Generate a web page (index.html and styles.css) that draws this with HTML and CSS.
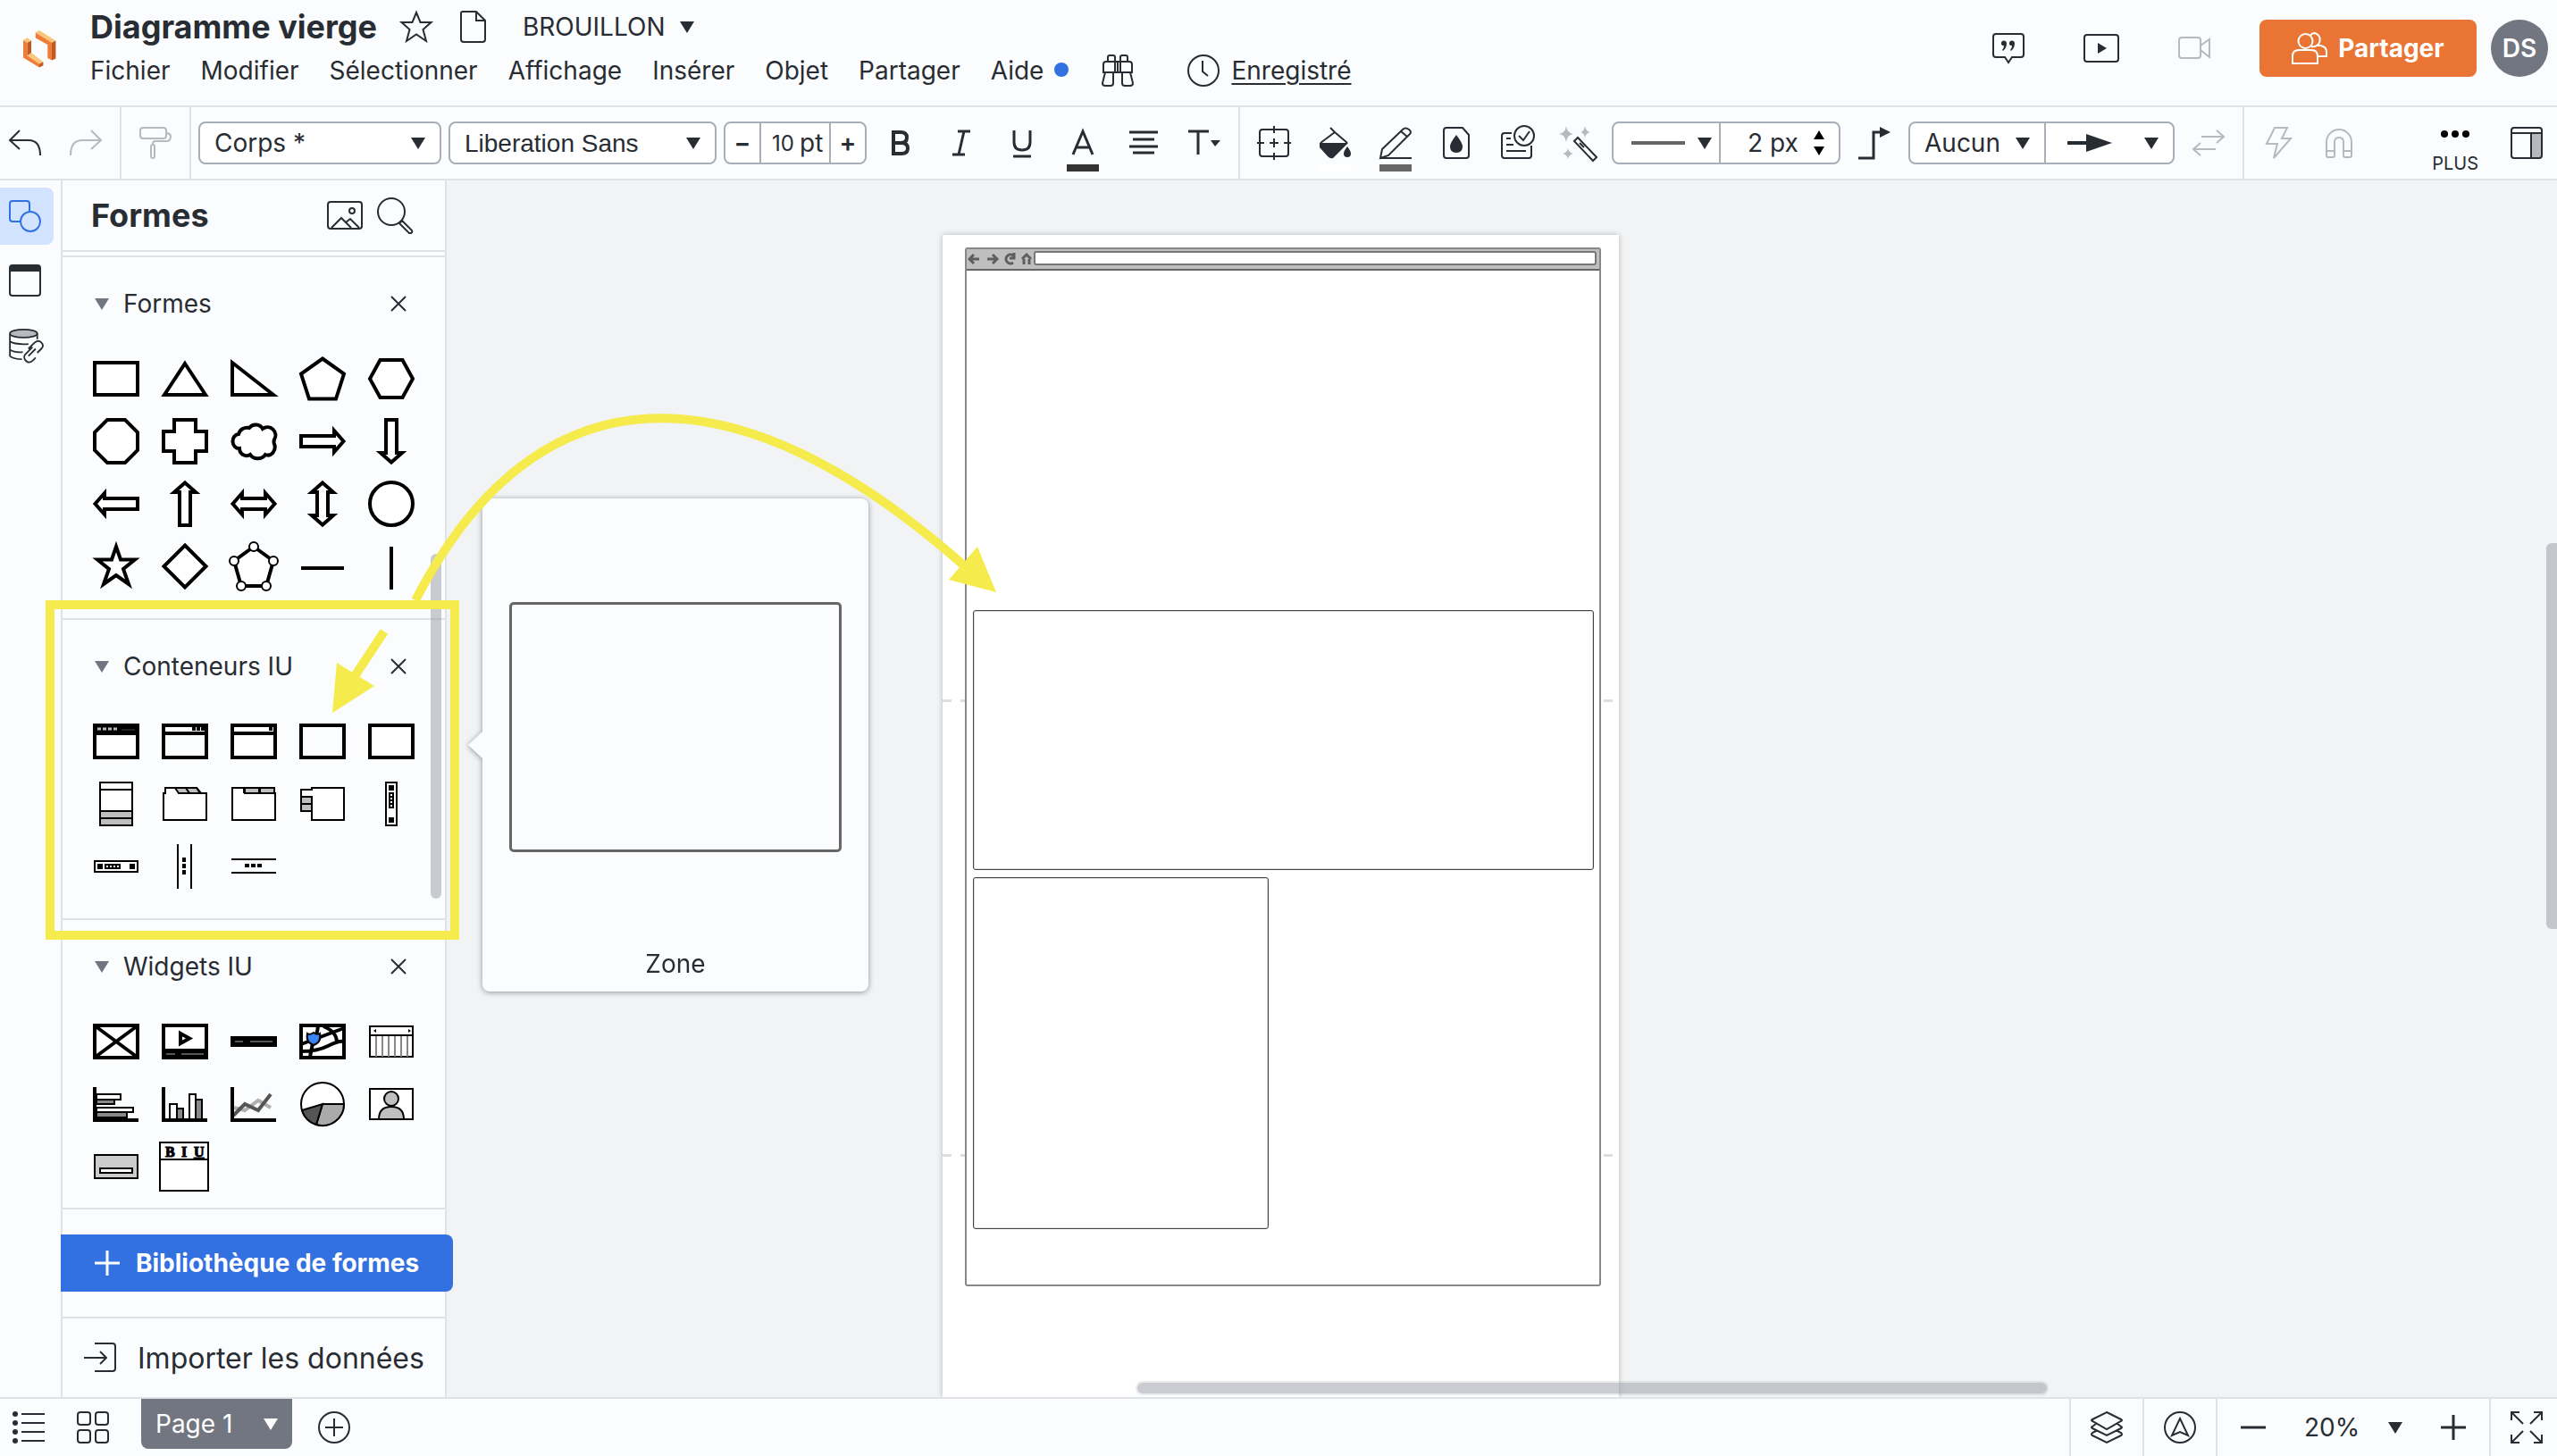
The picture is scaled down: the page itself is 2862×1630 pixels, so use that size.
FILE: index.html
```html
<!DOCTYPE html>
<html lang="fr">
<head>
    <meta charset="UTF-8">
    <meta name="viewport" content="width=device-width, initial-scale=1.0">
    <title>Diagramme vierge</title>
    <link rel="stylesheet" href="styles.css">
</head>
<body>
    <header class="header">
        <svg class="logo" viewBox="0 0 37 42">
            <path fill="#f9c67a" d="M0 11 4.600 8.300 9 11.600 4.600 14.300ZM4.600 28.300 9 25 22.400 35.300 18 37.500ZM13.800 2.600 18 0 36.400 11.600 32 13.800Z"/>
            <path fill="#f07d35" d="M0 11 4.600 14V28.300L18 37.500V41.600L0 30.500ZM13.800 2.600 32 13.800V33.600L27.300 31V16L13.800 8.600Z"/>
            <path fill="#c05a22" d="M4.600 14 9 11.600V25L4.600 28.300ZM18 37.500 22.400 35.300V39.300L18 41.600ZM32 13.800 36.400 11.600V31.500L32 33.600Z"/>
        </svg>
        <div class="doc">
            <div class="doc-row">
                <h1>Diagramme vierge</h1>
                <button class="icon-btn" aria-label="Favori"><svg class="icon" viewBox="0 0 36 36"><path d="M18 2 22.500 13H34.500L25.500 21 29 34 18 26.500 7 34 10.500 21 1.500 13H13.500Z"/></svg></button>
                <button class="icon-btn doc-file" aria-label="Document"><svg class="icon" viewBox="0 0 36 36"><path d="M6 1H22L32 11V32Q32 35 29 35H8Q5 35 5 32V3Q5 1 7 1ZM22 1V11H32"/></svg></button>
                <span class="caret status"><select aria-label="Statut"><option>BROUILLON</option></select></span>
            </div>
            <nav class="menu">
                <a href="#">Fichier</a>
                <a href="#">Modifier</a>
                <a href="#">Sélectionner</a>
                <a href="#">Affichage</a>
                <a href="#">Insérer</a>
                <a href="#">Objet</a>
                <a href="#">Partager</a>
                <a href="#" class="help">Aide</a>
                <button class="icon-btn find" aria-label="Rechercher"><svg class="icon" viewBox="0 0 36 36"><path d="M2 20V11Q2 8 5 8H31Q34 8 34 11V20ZM15 8V20M21 8V20M18 8V20M7 8V3Q7 1 9 1H13Q15 1 15 3V8M21 8V3Q21 1 23 1H27Q29 1 29 3V8M4 20 1 32Q1 35 4 35H10Q13 35 13 32V20M32 20 35 32Q35 35 32 35H26Q23 35 23 32V20"/></svg></button>
                <svg class="icon clock" viewBox="0 0 36 36"><circle cx="18" cy="18" r="17"/><path d="M17 7V19L23 24"/></svg>
                <a href="#" class="saved">Enregistré</a>
            </nav>
        </div>
        <div class="header-actions">
            <button class="icon-btn" aria-label="Commentaires"><svg class="icon" viewBox="0 0 36 36"><path d="M4 2H32Q35 2 35 5V25Q35 28 32 28H22L18 34 14 28H4Q1 28 1 25V5Q1 2 4 2Z"/><path class="solid" d="M10 13A3 3 0 1 1 16 12Q16 18 12 21L11 20Q13 18 13 15Q10 15 10 13ZM19 13A3 3 0 1 1 25 12Q25 18 21 21L20 20Q22 18 22 15Q19 15 19 13Z"/></svg></button>
            <button class="icon-btn" aria-label="Présenter"><svg class="icon wide" viewBox="0 0 40 36"><rect x="1" y="3" width="38" height="30" rx="3"/><path class="solid" d="M16 12 26 18 16 24Z"/></svg></button>
            <button class="icon-btn muted" aria-label="Vidéo"><svg class="icon" viewBox="0 0 36 36"><rect x="1" y="6" width="24" height="23" rx="3"/><path d="M25 15 35 8V28L25 20"/></svg></button>
            <button class="share"><svg class="icon wide" viewBox="0 0 40 36"><path d="M1 35V27Q1 20 8 20H22Q29 20 29 27V35ZM22 16A6 6 0 1 0 26 1Q22 1 21 4M29 15H32Q39 16 39 22V27H30"/><ellipse cx="15.500" cy="10" rx="8" ry="8"/></svg>Partager</button>
            <button class="avatar">DS</button>
        </div>
    </header>

    <div class="toolbar">
        <div class="group history">
            <button class="icon-btn" aria-label="Annuler"><svg class="icon" viewBox="0 0 36 36"><path d="M12 4 1 15 12 25M1 15H22Q35 15 35 32"/></svg></button>
            <button class="icon-btn muted" aria-label="Rétablir"><svg class="icon" viewBox="0 0 36 36"><path d="M24 4 35 15 24 25M35 15H14Q1 15 1 32"/></svg></button>
        </div>
        <div class="group painter">
            <button class="icon-btn muted" aria-label="Copier le style"><svg class="icon" viewBox="0 0 36 36"><rect x="1" y="1" width="29" height="12" rx="3"/><path d="M30 7Q35 7 35 11T31 16H18Q15 16 15 19V20"/><rect x="13" y="20" width="4" height="15" rx="2"/></svg></button>
        </div>
        <div class="group text-tools">
            <span class="caret box box-style"><select aria-label="Style"><option>Corps *</option></select></span>
            <span class="caret box box-font"><select aria-label="Police"><option>Liberation Sans</option></select></span>
            <div class="stepper">
                <button aria-label="Réduire">−</button>
                <label class="size"><input type="text" value="10" aria-label="Taille">pt</label>
                <button aria-label="Agrandir">+</button>
            </div>
            <div class="tools">
                <button class="tool" aria-label="Gras"><svg class="icon thick" viewBox="0 0 36 36"><path d="M10 6H18Q25 6 25 12T18 18H10ZM10 18H19Q26 18 26 24T19 30H10Z"/></svg></button>
                <button class="tool" aria-label="Italique"><svg class="icon mid" viewBox="0 0 36 36"><path d="M14 5H28M8 31H22M21 5 15 31"/></svg></button>
                <button class="tool" aria-label="Souligné"><svg class="icon mid" viewBox="0 0 36 36"><path d="M9 4V17Q9 26 18 26T27 17V4M8 33H28"/></svg></button>
                <button class="tool bar-dark" aria-label="Couleur du texte"><svg class="icon mid" viewBox="0 0 36 36"><path d="M7 31 18 5 29 31M11 23H25"/></svg></button>
                <button class="tool" aria-label="Alignement"><svg class="icon mid" viewBox="0 0 36 36"><path d="M2 6H34M6 14H30M2 22H34M6 29H30"/></svg></button>
                <button class="tool" aria-label="Options de texte"><svg class="icon mid" viewBox="0 0 36 36"><path d="M0 5H23M11 5V31"/><path class="solid" d="M25 15H36L30 22Z"/></svg></button>
            </div>
        </div>
        <div class="group shape-tools">
            <div class="tools">
                <button class="tool" aria-label="Position"><svg class="icon" viewBox="0 0 36 36"><rect x="2" y="3" width="32" height="30" rx="3"/><path d="M18-1V7M18 29V37M-1 18H7M29 18H37M18 13V23M13 18H23"/></svg></button>
                <button class="tool bar-white" aria-label="Remplissage"><svg class="icon" viewBox="0 0 36 36"><path d="M13 1 18 6 32 18M18 6 2 18"/><path class="solid" d="M1 18H33L16 35Q13 36 10 33L1 23ZM32 22Q36 27 36 30Q36 34 32 34T28 30Q28 27 32 22Z"/></svg></button>
                <button class="tool bar-gray" aria-label="Contour"><svg class="icon" viewBox="0 0 36 36"><path d="M3 25 26 3Q29 0 33 3T33 9L10 32 1 35ZM24 5 31 11M1 35H36"/></svg></button>
                <button class="tool" aria-label="Opacité"><svg class="icon" viewBox="0 0 36 36"><path d="M7 1H25L32 9V32Q32 35 29 35H7Q4 35 4 32V4Q4 1 7 1Z"/><path class="solid" d="M18 9Q25 18 25 22Q25 29 18 29T11 22Q11 18 18 9Z"/></svg></button>
                <button class="tool" aria-label="Validation"><svg class="icon" viewBox="0 0 36 36"><path d="M12 7H4Q1 7 1 10V32Q1 35 4 35H31Q34 35 34 32V21M6 13H11M6 20H14M6 27H28"/><circle cx="26" cy="10" r="11"/><path d="M20 10 25 15 32 5"/></svg></button>
                <button class="tool" aria-label="Assistant"><svg class="icon" viewBox="0 0 36 36"><path d="M14 16 18 12 39 34 35 38ZM20 18 25 23"/><path fill="#b6b9bd" stroke="none" d="M5-1Q6 7 13 8Q6 9 5 17Q4 9-3 8Q4 7 5-1ZM26-1Q27 5 32 6Q27 7 26 12Q25 7 21 6Q25 5 26-1ZM7 24Q8 29 13 30Q8 31 7 36Q6 31 1 30Q6 29 7 24Z"/></svg></button>
            </div>
            <div class="joined">
                <button class="caret pick pick-line" aria-label="Style de ligne"><svg width="60" height="20" viewBox="0 0 60 20"><path d="M0 10H60" stroke="#666" stroke-width="4"/></svg></button>
                <label class="spin"><input type="text" value="2 px" aria-label="Épaisseur"><svg width="12" height="28" viewBox="0 0 12 28"><path d="M6 0 12 10H0ZM6 28 12 18H0Z"/></svg></label>
            </div>
            <button class="tool" aria-label="Type de ligne"><svg class="icon mid" viewBox="0 0 36 36"><path d="M0 35H17V6H25"/><path class="solid" d="M24 0 36 6 24 12Z"/></svg></button>
            <div class="joined">
                <span class="caret pick pick-start"><select aria-label="Début de ligne"><option>Aucun</option></select></span>
                <button class="caret pick pick-end" aria-label="Fin de ligne"><svg width="50" height="20" viewBox="0 0 50 20"><path d="M0 10H24" stroke="#282c33" stroke-width="4"/><path d="M21 0 50 10 21 20Z" fill="#282c33"/></svg></button>
            </div>
            <button class="tool muted" aria-label="Inverser"><svg class="icon" viewBox="0 0 36 36"><path d="M10 11H35M27 4 35 11 27 18M26 25H1M9 18 1 25 9 32"/></svg></button>
        </div>
        <div class="group extra">
            <button class="tool muted" aria-label="Actions"><svg class="icon" viewBox="0 0 36 36"><path d="M14 1H28L22 13H32L13 35 17 19H5Z"/></svg></button>
            <button class="tool muted" aria-label="Aimant"><svg class="icon" viewBox="0 0 36 36"><path d="M4 32V17A14 14 0 0 1 32 17V32Q32 34 30 34H25Q23 34 23 32V17Q23 12 18 12T13 17V32Q13 34 11 34H6Q4 34 4 32ZM4 27H13M23 27H32"/></svg></button>
        </div>
        <div class="toolbar-end">
            <button class="more"><svg width="34" height="10" viewBox="0 0 34 10"><circle cx="5" cy="5" r="4"/><circle cx="17" cy="5" r="4"/><circle cx="29" cy="5" r="4"/></svg>PLUS</button>
            <button class="icon-btn" aria-label="Panneau"><svg class="icon" viewBox="0 0 36 36"><path fill="#b6b9bd" stroke="none" d="M23 7H35V35H23Z"/><rect x="1" y="1" width="34" height="34" rx="3"/><path d="M1 7H35M23 7V35"/></svg></button>
        </div>
    </div>

    <main class="workspace">
        <aside class="rail">
            <button class="rail-btn active" aria-label="Formes"><svg class="icon" viewBox="0 0 36 36"><path d="M13 24H4Q1 24 1 21V4Q1 1 4 1H20Q23 1 23 4V13"/><circle cx="24" cy="24" r="11"/></svg></button>
            <button class="rail-btn" aria-label="Pages"><svg class="icon" viewBox="0 0 36 36"><rect x="1" y="1" width="34" height="34" rx="3"/><path class="solid" d="M1 2H35V8H1Z"/></svg></button>
            <button class="rail-btn" aria-label="Données"><svg class="icon wide" viewBox="0 0 40 40"><ellipse cx="16" cy="6" rx="17" ry="5" fill="#b6b9bd"/><path d="M-1 6V34Q4 38 14 38M33 6V13M-1 16Q6 20 22 19M-1 26Q5 30 15 29M22 25 29 18Q34 13 38 17T38 25L33 30M27 23 18 32Q15 36 19 40T28 39L31 36M22 34 31 25"/></svg></button>
        </aside>

        <section class="panel">
            <div class="panel-head">
                <h2>Formes</h2>
                <button class="icon-btn" aria-label="Images"><svg class="icon big" viewBox="0 0 40 40"><rect x="1" y="5" width="38" height="30" rx="3"/><circle cx="28" cy="15" r="3"/><path d="M5 34 16 23 27 34M21 28 26 24 36 34"/></svg></button>
                <button class="icon-btn" aria-label="Rechercher une forme"><svg class="icon big" viewBox="0 0 40 40"><circle cx="16" cy="16" r="15"/><path d="M25 29 28 26 39 37Q40 39 38 40L36 40Z"/></svg></button>
            </div>
            <div class="panel-scroll">
                <section class="lib">
                    <h3><span class="arrow"></span>Formes<button class="close" aria-label="Fermer"><svg width="16" height="16" viewBox="0 0 16 16"><path d="M0 0 16 16M16 0 0 16"/></svg></button></h3>
                    <div class="shapes">
                        <svg viewBox="0 0 56 56"><rect x="4" y="10" width="48" height="36"/></svg>
                        <svg viewBox="0 0 56 56"><path d="M28 11 51 46H5Z"/></svg>
                        <svg viewBox="0 0 56 56"><path d="M4 10V46H50Z"/></svg>
                        <svg viewBox="0 0 56 56"><path d="M28 5.500 52 22.500 43 50.500H13L4 22.500Z"/></svg>
                        <svg viewBox="0 0 56 56"><path d="M15.500 7H40.500L52 28 40.500 49H15.500L4 28Z"/></svg>

                        <svg viewBox="0 0 56 56"><path d="M18 4H38L52 18V38L38 52H18L4 38V18Z"/></svg>
                        <svg viewBox="0 0 56 56"><path d="M16 4H40V17H52V39H40V52H16V39H4V17H16Z"/></svg>
                        <svg viewBox="0 0 56 56"><path d="M11 20A10 10 0 0 1 23 13A9 9 0 0 1 38 14A9 9 0 0 1 51 26Q50 29 51 31A8 9 0 0 1 41 43A10 9 0 0 1 24 43A8 8 0 0 1 12 36A7 8 0 0 1 11 20Z"/></svg>
                        <svg viewBox="0 0 56 56"><path d="M4 22H41V16L51.500 28 41 40V34H4Z"/></svg>
                        <svg viewBox="0 0 56 56"><path transform="rotate(90 28 28)" d="M4 22H41V16L51.500 28 41 40V34H4Z"/></svg>

                        <svg viewBox="0 0 56 56"><path transform="rotate(180 28 28)" d="M4 22H41V16L51.500 28 41 40V34H4Z"/></svg>
                        <svg viewBox="0 0 56 56"><path transform="rotate(-90 28 28)" d="M4 22H41V16L51.500 28 41 40V34H4Z"/></svg>
                        <svg viewBox="0 0 56 56"><path d="M4.500 28 15 16V22H41V16L51.500 28 41 40V34H15V40Z"/></svg>
                        <svg viewBox="0 0 56 56"><path transform="rotate(90 28 28)" d="M4.500 28 15 16V22H41V16L51.500 28 41 40V34H15V40Z"/></svg>
                        <svg viewBox="0 0 56 56"><circle cx="28" cy="28" r="24"/></svg>

                        <svg viewBox="0 0 56 56"><path d="M28 6 33 20.500H49L36 31 42 48 28 38 14 48 20 31 7 20.500H23Z"/></svg>
                        <svg viewBox="0 0 56 56"><path d="M28 4.500 51.500 28 28 51.500 4.500 28Z"/></svg>
                        <svg viewBox="0 0 56 56"><path d="M28 6 50 22 42 50H14L6 22Z"/><g stroke-width="2"><circle cx="28" cy="6" r="5"/><circle cx="50" cy="22" r="5"/><circle cx="42" cy="50" r="5"/><circle cx="14" cy="50" r="5"/><circle cx="6" cy="22" r="5"/></g></svg>
                        <svg viewBox="0 0 56 56"><path d="M4 30H52"/></svg>
                        <svg viewBox="0 0 56 56"><path d="M28 6V54"/></svg>
                    </div>
                </section>

                <section class="lib">
                    <h3><span class="arrow"></span>Conteneurs IU<button class="close" aria-label="Fermer"><svg width="16" height="16" viewBox="0 0 16 16"><path d="M0 0 16 16M16 0 0 16"/></svg></button></h3>
                    <div class="shapes">
                        <svg viewBox="0 0 56 56"><rect x="4" y="10" width="48" height="36"/><path fill="#000" stroke="none" d="M4 10H52V21H4Z"/><path stroke="#bbb" stroke-width="3" stroke-dasharray="4 2" d="M7 14H31"/><path stroke="#444" stroke-width="1" d="M34 15H49"/></svg>
                        <svg viewBox="0 0 56 56"><path d="M4 10H52V19H4Z"/><path fill="none" d="M4 19H52V46H4Z"/><path stroke-dasharray="4 1" d="M36 14H50"/></svg>
                        <svg viewBox="0 0 56 56"><path d="M4 10H52V19H4Z"/><path d="M4 19H52V46H4Z"/><path d="M45 14H49"/></svg>
                        <svg viewBox="0 0 56 56"><rect x="4" y="10" width="48" height="36" fill="none"/></svg>
                        <svg viewBox="0 0 56 56"><rect x="4" y="10" width="48" height="36"/></svg>

                        <svg viewBox="0 0 56 56" class="fine"><path d="M10 4H46V52H10ZM10 12H46"/><path fill="#bfbfbf" d="M10 36H46V44H10ZM10 44H46V52H10Z"/></svg>
                        <svg viewBox="0 0 56 56" class="fine"><path d="M4 16H6V10H41L46 16H52V46H4Z"/><path fill="#bfbfbf" d="M17 10H29L33 16H21ZM29 10H41L45 16H33Z"/></svg>
                        <svg viewBox="0 0 56 56" class="fine"><path d="M4 10H51V16H52V46H4Z"/><path fill="#bfbfbf" d="M18 10H34V16H18ZM35 10H51V16H35ZM17 10V16"/></svg>
                        <svg viewBox="0 0 56 56" class="fine"><path d="M16 10H52V46H16V36H4V12H16Z"/><path fill="#bfbfbf" d="M4 20H16V28H4ZM4 28H16V36H4Z"/><path d="M16 20V36"/></svg>
                        <svg viewBox="0 0 56 56" class="fine"><rect x="22" y="4" width="12" height="48"/><path stroke-width="6" d="M28 7V13M28 43V49"/><path d="M26 16H30V32H26ZM26 20H30M26 24H30M26 28H30"/></svg>

                        <svg viewBox="0 0 56 56" class="fine"><rect x="4" y="22" width="48" height="12"/><path stroke-width="6" d="M7 28H13M43 28H49"/><path d="M16 26H32V30H16ZM20 26V30M24 26V30M28 26V30"/></svg>
                        <svg viewBox="0 0 56 56" class="fine"><path d="M20 3V53M35 3V53"/><path stroke-width="4" stroke-dasharray="5 2" d="M27 18V38"/></svg>
                        <svg viewBox="0 0 56 56" class="fine"><path d="M3 20H53M3 35H53"/><path stroke-width="4" stroke-dasharray="5 2" d="M18 27H38"/></svg>
                    </div>
                </section>

                <section class="lib">
                    <h3><span class="arrow"></span>Widgets IU<button class="close" aria-label="Fermer"><svg width="16" height="16" viewBox="0 0 16 16"><path d="M0 0 16 16M16 0 0 16"/></svg></button></h3>
                    <div class="shapes">
                        <svg viewBox="0 0 56 56"><rect x="4" y="10" width="48" height="36"/><path d="M5 11 51 45M51 11 5 45"/></svg>
                        <svg viewBox="0 0 56 56"><rect x="4" y="10" width="48" height="36"/><path fill="#000" stroke="none" d="M4 36H52V46H4Z"/><path d="M23 19 33 24.500 23 30Z"/><path stroke="#aaa" stroke-width="1" d="M7 42H17M24 42H49"/></svg>
                        <svg viewBox="0 0 56 56"><path stroke-width="12" d="M2 28H54"/><path stroke="#aaa" stroke-width="1" d="M7 28H16M24 28H49"/></svg>
                        <svg viewBox="0 0 56 56"><rect x="4" y="10" width="48" height="36"/><path fill="none" d="M4 31 52 13M4 39Q22 39 34 33T52 28M23 10Q22 22 17 30L14 45M29 11Q44 17 44 29"/><path fill="#3b82f6" stroke-width="2" d="M11 19Q14 21 18 18Q22 21 25 19Q27 29 18 32Q9 29 11 19Z"/></svg>
                        <svg viewBox="0 0 56 56" class="fine"><rect x="4" y="11" width="48" height="34"/><path stroke="#888" d="M11 21V45M18 21V45M25 21V45M32 21V45M39 21V45M46 21V45"/><path d="M4 21H52"/><path fill="#000" stroke="none" d="M8 16 11 14V18ZM50 16 47 14V18Z"/></svg>

                        <svg viewBox="0 0 56 56" class="fine"><path d="M6 17H33V23H6ZM6 32H47V37H6Z"/><path fill="#888" d="M6 23H26V28H6ZM6 37H40V43H6Z"/><path fill="none" stroke-width="4" d="M4 9V46H53"/></svg>
                        <svg viewBox="0 0 56 56" class="fine"><path d="M11 28H19V46H11ZM33 17H40V46H33Z"/><path fill="#888" d="M19 33H26V46H19ZM40 23H47V46H40Z"/><path fill="none" stroke-width="4" d="M4 9V46H53"/></svg>
                        <svg viewBox="0 0 56 56"><path fill="none" stroke="#b0b0b0" d="M6 32 18 35 33 24 47 32"/><path fill="none" stroke="#555" d="M5 41 18 28 33 35 47 17"/><path fill="none" d="M4 9V46H53"/></svg>
                        <svg viewBox="0 0 56 56" class="fine"><circle cx="28" cy="28" r="24"/><path fill="#aaa" d="M28 28H52A24 24 0 0 1 21 51Z"/><path fill="#555" d="M28 28 21 51A24 24 0 0 1 5 35Z"/></svg>
                        <svg viewBox="0 0 56 56" class="fine"><rect x="4" y="11" width="48" height="34"/><path fill="#bfbfbf" d="M14 45Q14 31 28 31T42 45Z"/><circle cx="28" cy="22" r="8" fill="#bfbfbf"/></svg>

                        <svg viewBox="0 0 56 56" class="fine"><rect x="4" y="15" width="48" height="26" fill="#ccc"/><rect x="10" y="30" width="36" height="5"/></svg>
                        <svg viewBox="0 0 56 56" class="fine"><path d="M0 1H54V55H0ZM0 20H54"/><text x="6" y="17">B</text><text x="24" y="17" font-style="italic">I</text><text x="38" y="17" text-decoration="underline">U</text></svg>
                    </div>
                </section>
            </div>
            <div class="scroll-y"></div>
            <div class="library">
                <button class="library-btn"><svg width="28" height="28" viewBox="0 0 28 28"><path d="M14 0V28M0 14H28"/></svg>Bibliothèque de formes</button>
            </div>
            <button class="import"><svg class="icon" viewBox="0 0 36 36"><path d="M12 2H32Q35 2 35 5V30Q35 33 32 33H12M0 18H25M18 11 25 18 18 25"/></svg>Importer les données</button>
        </section>

        <section class="canvas">
            <div class="page">
                <div class="page-break first"></div>
                <div class="page-break second"></div>
                <div class="browser">
                    <div class="browser-bar">
                        <svg width="72" height="14" viewBox="0 0 72 14"><path d="M13 7H2M7 2 2 7 7 12M22 7H33M28 2 33 7 28 12M51 3A5 5 0 1 0 51 11M52 0V6H47M61 7 66 2 71 7M63 7V13M69 7V13"/></svg>
                        <div class="address"></div>
                    </div>
                </div>
                <div class="zone zone-wide"></div>
                <div class="zone zone-small"></div>
            </div>
            <div class="preview">
                <div class="preview-shape"></div>
                <p>Zone</p>
            </div>
            <div class="scroll-x"></div>
            <div class="scroll-right"></div>
        </section>
    </main>

    <footer class="footer">
        <button class="icon-btn" aria-label="Liste"><svg class="icon" viewBox="0 0 36 36"><path d="M10 3H36M10 13H36M10 23H36M10 33H36"/><g class="solid"><circle cx="3" cy="3" r="3"/><circle cx="3" cy="13" r="3"/><circle cx="3" cy="23" r="3"/><circle cx="3" cy="33" r="3"/></g></svg></button>
        <button class="icon-btn" aria-label="Grille"><svg class="icon" viewBox="0 0 36 36"><rect x="1" y="1" width="14" height="14" rx="3"/><rect x="21" y="1" width="14" height="14" rx="3"/><rect x="1" y="21" width="14" height="14" rx="3"/><rect x="21" y="21" width="14" height="14" rx="3"/></svg></button>
        <button class="tab caret">Page 1</button>
        <button class="icon-btn add" aria-label="Ajouter une page"><svg class="icon" viewBox="0 0 36 36"><circle cx="18" cy="18" r="17"/><path d="M18 8V28M8 18H28"/></svg></button>
        <div class="footer-end">
            <button class="cell" aria-label="Calques"><svg class="icon" viewBox="0 0 36 36"><path d="M18 1 34 9Q36 10 34 11L18 20 2 11Q0 10 2 9ZM6 14 2 17Q0 18 2 19L18 27 34 19Q36 18 34 17L30 14M6 22 2 24Q0 26 2 27L18 35 34 27Q36 26 34 24L30 22"/></svg></button>
            <button class="cell" aria-label="Navigation"><svg class="icon" viewBox="0 0 36 36"><circle cx="18" cy="18" r="17"/><path d="M18 8 27 27 18 23 9 27Z"/></svg></button>
            <div class="zoom">
                <button class="icon-btn" aria-label="Zoom arrière"><svg class="icon zoom-icon" viewBox="0 0 28 28"><path d="M0 14H28"/></svg></button>
                <span class="caret level"><select aria-label="Zoom"><option>20%</option></select></span>
                <button class="icon-btn" aria-label="Zoom avant"><svg class="icon zoom-icon" viewBox="0 0 28 28"><path d="M0 14H28M14 0V28"/></svg></button>
            </div>
            <button class="cell last" aria-label="Plein écran"><svg class="icon" viewBox="0 0 36 36"><path d="M10 1H1V10M1 1 14 14M26 1H35V10M35 1 22 14M10 35H1V26M1 35 14 22M26 35H35V26M35 35 22 22"/></svg></button>
        </div>
    </footer>

    <!-- tutorial highlights drawn over the editor -->
    <svg class="guide" width="1200" height="1100" viewBox="0 0 1200 1100">
        <rect x="56" y="677" width="453" height="370"/>
        <path d="M465 672C601 408 823 406 1080 634M430 707 395 760"/>
        <path class="head" d="M1062 649 1094 612 1115 663ZM377 742 419 768 372 798Z"/>
    </svg>
</body>
</html>
```

FILE: styles.css
```css
* {
    box-sizing: border-box;
}
body {
    margin: 0;
    height: 100vh;
    display: flex;
    flex-direction: column;
    overflow: hidden;
    font-family: Inter, "Liberation Sans", sans-serif;
    font-size: 28px;
    color: #282c33;
    background: #fbfcfd;
}
h1, h2, h3, p {
    margin: 0;
}
button, select, input {
    font: inherit;
    color: inherit;
    background: none;
    border: none;
    padding: 0;
    margin: 0;
}
button {
    cursor: pointer;
}
select {
    appearance: none;
    outline: none;
}
a {
    color: inherit;
    text-decoration: none;
}

/* icons */
.icon {
    display: block;
    width: 36px;
    height: 36px;
    overflow: visible;
    fill: none;
    stroke: currentColor;
    stroke-width: 2;
}
.icon.wide, .icon.big {
    width: 40px;
}
.icon.big {
    height: 40px;
}
.icon.mid {
    stroke-width: 3;
}
.icon.thick {
    stroke-width: 4;
}
.icon .solid {
    fill: currentColor;
    stroke: none;
}
.icon-btn {
    flex: none;
    display: flex;
}
.muted {
    color: #b6b9bd;
}
.caret {
    position: relative;
    display: flex;
    align-items: center;
}
.caret::after {
    content: "";
    position: absolute;
    right: 16px;
    border: 8px solid transparent;
    border-top: 13px solid currentColor;
    border-bottom: none;
    pointer-events: none;
}

/* header */
.header {
    flex: none;
    display: flex;
    height: 120px;
    border-bottom: 2px solid #dfe2e7;
}
.logo {
    width: 37px;
    height: 42px;
    margin: 34px 38px 0 26px;
}
.doc-row {
    display: flex;
    align-items: center;
    height: 58px;
    padding-top: 2px;
}
h1 {
    width: 347px;
    font-size: 36px;
    font-weight: 700;
    white-space: nowrap;
}
.doc-file {
    margin-left: 27px;
}
.status {
    margin-left: 38px;
    width: 192px;
}
.status::after {
    right: 0;
}
.menu {
    display: flex;
    align-items: center;
    gap: 34px;
    height: 42px;
}
.help::after {
    content: "";
    display: inline-block;
    width: 16px;
    height: 16px;
    margin: 0 3px 3px 12px;
    border-radius: 50%;
    background: #3370e0;
}
.clock {
    margin-left: 26px;
}
.saved {
    margin-left: -21px;
    text-decoration: underline;
    text-decoration-thickness: 2px;
    text-underline-offset: 4px;
}
.header-actions {
    display: flex;
    align-items: center;
    gap: 66px;
    height: 108px;
    margin-left: auto;
    padding-right: 10px;
}
.share {
    display: flex;
    align-items: center;
    justify-content: center;
    gap: 12px;
    width: 243px;
    height: 64px;
    margin-left: -11px;
    border-radius: 8px;
    background: #e97434;
    color: #fff;
    font-weight: 700;
}
.avatar {
    width: 64px;
    height: 64px;
    margin-left: -50px;
    border-radius: 50%;
    background: #717680;
    color: #fff;
    font-weight: 600;
}

/* toolbar */
.toolbar {
    flex: none;
    display: flex;
    height: 82px;
    border-bottom: 2px solid #dfe2e7;
}
.group {
    display: flex;
    align-items: center;
    border-right: 2px solid #dfe2e7;
}
.history {
    gap: 32px;
    padding: 0 20px 0 10px;
}
.painter {
    padding: 0 20px;
}
.text-tools {
    gap: 8px;
    padding: 0 4px 0 8px;
}
.text-tools .tools {
    margin-left: -4px;
}
.shape-tools {
    gap: 4px;
    padding: 0 4px;
}
.extra {
    padding-left: 4px;
    border-right: none;
}
.tools {
    display: flex;
}
.tool {
    position: relative;
    width: 68px;
    height: 80px;
    display: flex;
    align-items: center;
    justify-content: center;
}
.bar-dark::after, .bar-white::after, .bar-gray::after {
    content: "";
    position: absolute;
    left: 16px;
    bottom: 8px;
    width: 36px;
    height: 8px;
    background: #333;
}
.bar-white::after {
    background: #fff;
}
.bar-gray::after {
    background: #666;
}
.box, .stepper, .joined {
    height: 48px;
    border: 2px solid #a9afb8;
    border-radius: 8px;
    background: #fff;
}
.box select {
    width: 100%;
    height: 44px;
    padding-left: 16px;
}
.box-style {
    width: 272px;
}
.box-font {
    width: 300px;
    font-family: "Liberation Sans", sans-serif;
}
.stepper {
    display: flex;
    width: 160px;
}
.stepper button {
    width: 38px;
    font-weight: 600;
}
.size {
    flex: 1;
    display: flex;
    align-items: center;
    gap: 3px;
    padding-left: 12px;
    border: 2px solid #a9afb8;
    border-width: 0 2px;
}
.size input {
    width: 28px;
    font-size: 24px;
}
.joined {
    display: flex;
}
.pick-line {
    width: 118px;
    padding-left: 20px;
}
.pick-line::after {
    right: 8px;
}
.spin {
    display: flex;
    align-items: center;
    justify-content: space-between;
    width: 134px;
    padding: 0 16px 0 30px;
    border-left: 2px solid #a9afb8;
}
.spin input {
    width: 64px;
}
.pick-start {
    width: 150px;
}
.pick-start select {
    width: 100%;
    padding-left: 16px;
}
.pick-end {
    width: 144px;
    padding-left: 24px;
    border-left: 2px solid #a9afb8;
}
.toolbar-end {
    display: flex;
    align-items: center;
    gap: 36px;
    margin-left: auto;
    padding-right: 16px;
}
.more {
    display: flex;
    flex-direction: column;
    align-items: center;
    gap: 16px;
    padding-top: 20px;
    font-size: 20px;
}

/* left rail */
.workspace {
    flex: 1;
    min-height: 0;
    display: flex;
}
.rail {
    flex: none;
    width: 70px;
    padding-top: 8px;
    border-right: 2px solid #dfe2e7;
}
.rail-btn {
    display: flex;
    align-items: center;
    width: 60px;
    height: 64px;
    margin-bottom: 8px;
    padding-left: 10px;
    border-radius: 0 8px 8px 0;
}
.rail-btn.active {
    background: #d2e3ff;
    color: #3370e0;
}

/* shapes panel */
.panel {
    position: relative;
    flex: none;
    display: flex;
    flex-direction: column;
    width: 430px;
    border-right: 2px solid #dfe2e7;
}
.panel-head {
    display: flex;
    align-items: center;
    gap: 16px;
    height: 80px;
    padding: 0 36px 0 32px;
    border-bottom: 2px solid #dfe2e7;
}
h2 {
    flex: 1;
    font-size: 36px;
    font-weight: 700;
}
.panel-scroll {
    flex: 1;
    min-height: 0;
    margin-top: 4px;
    overflow: hidden;
}
.lib {
    padding: 32px 20px 23px 21px;
    border-top: 2px solid #dfe2e7;
}
h3 {
    display: flex;
    align-items: center;
    height: 40px;
    margin-bottom: 29px;
    padding: 0 24px 0 15px;
    font-size: 28px;
    font-weight: 400;
}
.arrow {
    margin-right: 16px;
    border: 8px solid transparent;
    border-top: 13px solid #717680;
    border-bottom: none;
}
.close {
    display: flex;
    margin-left: auto;
}
.close svg {
    overflow: visible;
    stroke: currentColor;
    stroke-width: 2;
}
.shapes {
    display: grid;
    grid-template-columns: repeat(5, 77px);
    grid-auto-rows: 70px;
    place-items: center;
}
.shapes svg {
    width: 56px;
    height: 56px;
    overflow: visible;
    fill: #fff;
    stroke: #000;
    stroke-width: 4;
    stroke-miterlimit: 10;
}
.shapes .fine {
    stroke-width: 2;
}
.shapes text {
    font: bold 16px "Liberation Serif", serif;
    fill: #000;
    stroke-width: 1;
}
.scroll-y {
    position: absolute;
    right: 4px;
    top: 418px;
    width: 12px;
    height: 386px;
    border-radius: 6px;
    background: rgba(150, 153, 163, 0.5);
}
.library {
    padding: 28px 0;
    border: 2px solid #dfe2e7;
    border-width: 2px 0;
}
.library-btn {
    position: relative;
    z-index: 1;
    display: flex;
    align-items: center;
    gap: 18px;
    width: 439px;
    height: 64px;
    margin-left: -2px;
    padding-left: 38px;
    border-radius: 0 8px 8px 0;
    background: #3370e0;
    color: #fff;
    font-weight: 700;
    white-space: nowrap;
}
.library-btn svg {
    stroke: currentColor;
    stroke-width: 3;
}
.import {
    display: flex;
    align-items: center;
    gap: 24px;
    height: 88px;
    padding-left: 24px;
    font-size: 32px;
    white-space: nowrap;
}

/* drawing area */
.canvas {
    position: relative;
    flex: 1;
    overflow: hidden;
    background: #f2f3f5;
}
.page {
    position: absolute;
    left: 555px;
    top: 61px;
    bottom: 0;
    width: 757px;
    background: #fff;
    box-shadow: 0 0 6px rgba(0, 0, 0, 0.25);
}
.page-break {
    position: absolute;
    left: 0;
    right: 0;
    height: 3px;
    background: repeating-linear-gradient(to right, #dedede 0 10px, transparent 10px 20px);
}
.first {
    top: 520px;
}
.second {
    top: 1029px;
}
.browser {
    position: absolute;
    left: 25px;
    top: 14px;
    width: 712px;
    height: 1163px;
    border: 2px solid #888;
    border-radius: 3px;
    background: #fff;
}
.browser-bar {
    display: flex;
    align-items: flex-end;
    gap: 2px;
    height: 24px;
    padding: 0 3px 4px 1px;
    border-bottom: 2px solid #666;
    background: #bfbfbf;
}
.browser-bar svg {
    fill: none;
    stroke: #5e5e5e;
    stroke-width: 3;
}
.address {
    flex: 1;
    height: 16px;
    border: 2px solid #777;
    border-radius: 3px;
    background: #fff;
}
.zone {
    position: absolute;
    left: 34px;
    border: 1px solid #444;
    border-radius: 3px;
    box-shadow: inset 0 0 0 1px #ddd;
}
.zone-wide {
    top: 420px;
    width: 695px;
    height: 291px;
}
.zone-small {
    top: 719px;
    width: 331px;
    height: 394px;
}
.preview {
    position: absolute;
    left: 40px;
    top: 356px;
    width: 432px;
    height: 552px;
    padding: 116px 30px 0;
    border-radius: 8px;
    background: #fbfcfd;
    filter: drop-shadow(0 1px 3px rgba(0, 0, 0, 0.4));
    text-align: center;
}
.preview::before {
    content: "";
    position: absolute;
    left: -16px;
    top: 261px;
    border: 15px solid transparent;
    border-right: 16px solid #fbfcfd;
    border-left: none;
}
.preview-shape {
    height: 280px;
    margin-bottom: 108px;
    border: 3px solid #666;
    border-radius: 5px;
}
.scroll-x, .scroll-right {
    position: absolute;
    background: rgba(150, 153, 163, 0.5);
}
.scroll-x {
    left: 773px;
    bottom: 4px;
    width: 1018px;
    height: 12px;
    border-radius: 6px;
    box-shadow: 0 0 0 2px rgba(150, 153, 163, 0.2);
}
.scroll-right {
    right: 0;
    top: 406px;
    width: 12px;
    height: 432px;
    border-radius: 6px 0 0 6px;
}

/* footer */
.footer {
    flex: none;
    display: flex;
    align-items: center;
    gap: 36px;
    height: 66px;
    padding-left: 14px;
    border-top: 2px solid #dfe2e7;
}
.tab {
    align-self: flex-start;
    width: 169px;
    height: 56px;
    padding-left: 16px;
    border-radius: 0 0 8px 8px;
    background: #717680;
    color: #fff;
}
.add {
    margin-left: -7px;
}
.footer-end {
    display: flex;
    height: 64px;
    margin-left: auto;
}
.cell, .zoom {
    display: flex;
    align-items: center;
    justify-content: center;
    width: 82px;
    border-left: 2px solid #dfe2e7;
}
.last {
    justify-content: flex-start;
    width: 76px;
    padding-left: 22px;
}
.zoom {
    justify-content: space-between;
    width: 306px;
    padding: 0 26px;
}
.zoom-icon {
    width: 28px;
    height: 28px;
    stroke-width: 3;
}
.level {
    width: 110px;
}
.level::after {
    right: 0;
}

/* tutorial highlights */
.guide {
    position: absolute;
    left: 0;
    top: 0;
    z-index: 5;
    fill: none;
    stroke: #f5eb4d;
    stroke-width: 10;
    pointer-events: none;
}
.guide .head {
    fill: #f5eb4d;
    stroke: none;
}
```
